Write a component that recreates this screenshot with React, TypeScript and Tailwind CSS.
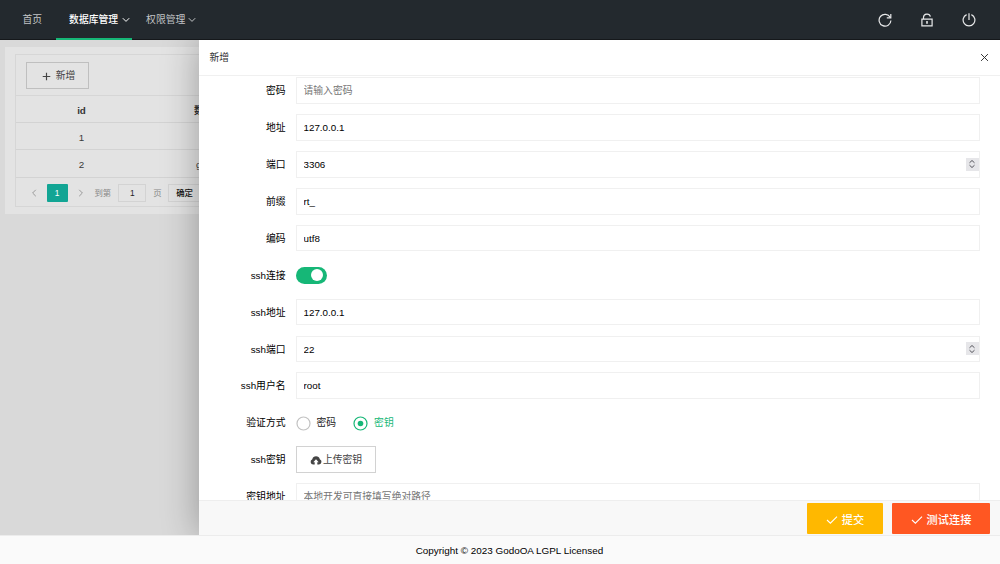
import { useState, type ReactNode } from 'react';

interface Field {
  label: string;
  value?: string;
  placeholder?: string;
  stepper?: boolean;
}

const connectionFields: Field[] = [
  { label: '密码', placeholder: '请输入密码' },
  { label: '地址', value: '127.0.0.1' },
  { label: '端口', value: '3306', stepper: true },
  { label: '前缀', value: 'rt_' },
  { label: '编码', value: 'utf8' },
];

const sshFields: Field[] = [
  { label: 'ssh地址', value: '127.0.0.1' },
  { label: 'ssh端口', value: '22', stepper: true },
  { label: 'ssh用户名', value: 'root' },
];

const rows = [
  { id: '1', name: '' },
  { id: '2', name: 'g' },
];

function Chevron({ className }: { className?: string }) {
  return (
    <svg viewBox="0 0 8 6" className={className} fill="none" stroke="currentColor" strokeWidth="1">
      <path d="M0.8 1.2 4 4.4 7.2 1.2" />
    </svg>
  );
}

function Check() {
  return (
    <svg viewBox="0 0 12 10" className="h-[10px] w-[12px]" fill="none" stroke="currentColor" strokeWidth="1.1">
      <path d="M1 5 4.4 8.2 11 1.6" />
    </svg>
  );
}

function FormRow({ label, children }: { label: string; children: ReactNode }) {
  return (
    <div className="mb-[10.3px] flex h-[26.6px] items-center">
      <label className="mr-[10px] w-[87px] shrink-0 pt-[1.5px] text-right text-black">{label}</label>
      {children}
    </div>
  );
}

function TextField({ field }: { field: Field }) {
  return (
    <FormRow label={field.label}>
      <div className="flex h-full w-[684px] items-center border border-[#f0f0f0] pl-[7px]">
        <input
          className="min-w-0 flex-1 pt-[1.5px] text-black outline-none placeholder:text-[#757575]"
          defaultValue={field.value}
          placeholder={field.placeholder}
        />
        {field.stepper && (
          <span className="flex h-[13px] w-[13px] items-center justify-center bg-[#e6e6e9]">
            <svg viewBox="0 0 8 10" className="h-[10px] w-[8px]" fill="none" stroke="#55555c" strokeWidth="1">
              <path d="M1.5 3.8 4 1.5 6.5 3.8M1.5 6.2 4 8.5 6.5 6.2" />
            </svg>
          </span>
        )}
      </div>
    </FormRow>
  );
}

function Header() {
  return (
    <header className="flex h-[40px] shrink-0 items-center border-b border-[#15181b] bg-[#23292e] text-[#c2c4c6]">
      <a className="ml-[22.5px] pt-px">首页</a>
      <a className="relative ml-[13.5px] flex h-[40px] w-[76px] items-center pt-px pl-[13.5px] font-medium text-white">
        数据库管理
        <Chevron className="ml-[4px] h-[6px] w-[8px] shrink-0" />
        <span className="absolute bottom-0 left-0 h-[2px] w-full bg-[#16b777]" />
      </a>
      <a className="ml-[14.5px] flex items-center pt-px">
        权限管理
        <Chevron className="ml-[3px] h-[6px] w-[8px]" />
      </a>
      <div className="mr-[24px] ml-auto flex items-center gap-[28px] text-[#e8e9ea]">
        <svg viewBox="0 0 14 14" className="h-[14px] w-[14px]" fill="none" stroke="currentColor" strokeWidth="1.2">
          <path d="M12.2 4.4A5.9 5.9 0 1 0 12.9 7.4" />
          <path d="M12.8 0.9V4.9H8.8" />
        </svg>
        <svg viewBox="0 0 14 14" className="h-[14px] w-[14px]" fill="none" stroke="currentColor" strokeWidth="1.2">
          <path d="M1.9 6.1H12.1V12.9H1.9Z" />
          <path d="M3.5 6V4.3A3.5 3.3 0 0 1 10.4 3.6" />
          <path d="M7 8.3V11M6 8.8H8" />
        </svg>
        <svg viewBox="0 0 14 14" className="h-[14px] w-[14px]" fill="none" stroke="currentColor" strokeWidth="1.2">
          <path d="M4.6 1.6A5.9 5.9 0 1 0 9.4 1.6" />
          <path d="M7 0.3V7" />
        </svg>
      </div>
    </header>
  );
}

// Table page, dimmed while the drawer is open
function ListPage() {
  return (
    <div className="h-full w-[198.5px] shrink-0 overflow-hidden bg-[#d9d9d9] pt-[7px] pl-[5px] text-[#3a3a3a]">
      <div className="h-[167px] w-[400px] bg-[#e3e3e3] pt-[7px] pl-[10px]">
        <div className="h-[153px] border border-[#d6d6d6]">
          <div className="flex h-[41px] items-center border-b border-[#d6d6d6] pl-[10px]">
            <button className="flex h-[27px] w-[63px] items-center justify-center gap-[5px] border border-[#bfbfbf] pt-[2px] pl-[2px] text-[#444]">
              <svg viewBox="0 0 10 10" className="h-[9px] w-[9px]" stroke="currentColor" strokeWidth="1.3">
                <path d="M5 0.8V9.2M0.8 5H9.2" />
              </svg>
              新增
            </button>
          </div>
          <div className="flex h-[27px] items-center border-b border-[#d3d3d3] pt-[3px] font-bold text-[#333]">
            <span className="w-[131px] text-center">id</span>
            <span className="ml-[47px]">数据库名</span>
          </div>
          {rows.map(row => (
            <div key={row.id} className="flex h-[27.3px] items-center border-b border-[#d3d3d3] pt-[3px]">
              <span className="w-[131px] text-center">{row.id}</span>
              <span className="ml-[49px]">{row.name}</span>
            </div>
          ))}
          <div className="flex h-[29px] items-center pt-px pl-[14px] text-[8.4px]">
            <Chevron className="h-[6px] w-[8px] rotate-90 text-[#999]" />
            <span className="ml-[8.5px] flex h-[18px] w-[21px] items-center justify-center rounded-[1px] bg-[#12a594] text-white">
              1
            </span>
            <Chevron className="ml-[9px] h-[6px] w-[8px] -rotate-90 text-[#999]" />
            <span className="ml-[10px] pt-px text-[#888]">到第</span>
            <span className="ml-[7px] flex h-[18px] w-[28px] items-center justify-center border border-[#d3d3d3] text-[#222]">1</span>
            <span className="ml-[7px] pt-px text-[#888]">页</span>
            <button className="ml-[6.5px] flex h-[18px] w-[33px] items-center border border-[#d3d3d3] pt-px pl-[7px] font-medium whitespace-nowrap text-[#111]">
              确定
            </button>
          </div>
        </div>
      </div>
    </div>
  );
}

function Drawer() {
  const [ssh, setSsh] = useState(true);
  const [auth, setAuth] = useState('密钥');

  return (
    <section className="flex min-w-0 flex-1 flex-col bg-white shadow-[0_0_35px_rgba(0,0,0,0.32)]">
      <div className="flex h-[36px] shrink-0 items-center justify-between border-b border-[#f0f0f0] pr-[11px] pl-[11px] text-[#333]">
        <span className="pt-px">新增</span>
        <svg viewBox="0 0 10 10" className="h-[9px] w-[9px]" stroke="#333" strokeWidth="1.1">
          <path d="M1.2 1.2 8.8 8.8M8.8 1.2 1.2 8.8" />
        </svg>
      </div>

      <form className="min-h-0 flex-1 overflow-hidden pt-[1.3px]">
        {connectionFields.map(field => (
          <TextField key={field.label} field={field} />
        ))}
        <FormRow label="ssh连接">
          <button
            type="button"
            onClick={() => setSsh(!ssh)}
            className="flex h-[17px] w-[31px] items-center justify-end rounded-full bg-[#16b777] pr-[3.5px]"
          >
            <span className="h-[12px] w-[12px] rounded-full bg-white" />
          </button>
        </FormRow>
        {sshFields.map(field => (
          <TextField key={field.label} field={field} />
        ))}
        <FormRow label="验证方式">
          {['密码', '密钥'].map(option => (
            <span
              key={option}
              onClick={() => setAuth(option)}
              className={auth === option ? 'mr-[17px] flex items-center gap-[6px] pt-[1.5px] text-[#16b777]' : 'mr-[17px] flex items-center gap-[6px] pt-[1.5px] text-[#222]'}
            >
              <svg viewBox="0 0 15 15" className="h-[15px] w-[15px]" fill="none">
                <circle cx="7.5" cy="7.5" r="6.5" stroke={auth === option ? '#16b777' : '#c2c2c2'} strokeWidth="1.2" />
                {auth === option && <circle cx="7.5" cy="7.5" r="2.8" fill="#16b777" />}
              </svg>
              {option}
            </span>
          ))}
        </FormRow>
        <FormRow label="ssh密钥">
          <button type="button" className="flex h-full w-[80px] items-center justify-center gap-[1px] border border-[#d2d2d2] pt-[1.5px] pl-px text-[#444]">
            <svg viewBox="0 0 12 9" className="h-[9px] w-[12px]">
              <path
                fill="#444"
                d="M3.2 8.4H4.7V6.2H3.3L6 3.2 8.7 6.2H7.3V8.4H9A2.7 2.7 0 0 0 9.8 3.2 3.9 3.9 0 0 0 2.3 3.2 2.7 2.7 0 0 0 3.2 8.4Z"
              />
            </svg>
            上传密钥
          </button>
        </FormRow>
        <TextField field={{ label: '密钥地址', placeholder: '本地开发可直接填写绝对路径' }} />
      </form>

      <div className="flex h-[35px] shrink-0 items-center justify-end gap-[9px] border-t border-[#eeeeee] bg-[#f8f8f8] pt-px pr-[10px] text-[11.2px] font-medium text-white">
        <button className="flex h-[31px] w-[76px] items-center justify-center gap-[4px] rounded-[1px] bg-[#ffb800] pt-[2px]">
          <Check />
          提交
        </button>
        <button className="flex h-[31px] w-[98px] items-center justify-center gap-[4px] rounded-[1px] bg-[#ff5722] pt-[2px]">
          <Check />
          测试连接
        </button>
      </div>
    </section>
  );
}

export default function App() {
  return (
    <div className="flex h-[564px] w-[1000px] flex-col overflow-hidden bg-white font-['Liberation_Sans','Noto_Sans_CJK_SC',sans-serif] text-[9.8px] leading-[14px]">
      <Header />
      <main className="flex h-[495px] shrink-0 overflow-hidden">
        <ListPage />
        <Drawer />
      </main>
      <footer className="flex flex-1 items-center justify-center border-t border-[#ececec] bg-[#fafafa] pt-[2px] pl-[19px] text-[9.9px] text-black">
        Copyright © 2023 GodoOA LGPL Licensed
      </footer>
    </div>
  );
}
